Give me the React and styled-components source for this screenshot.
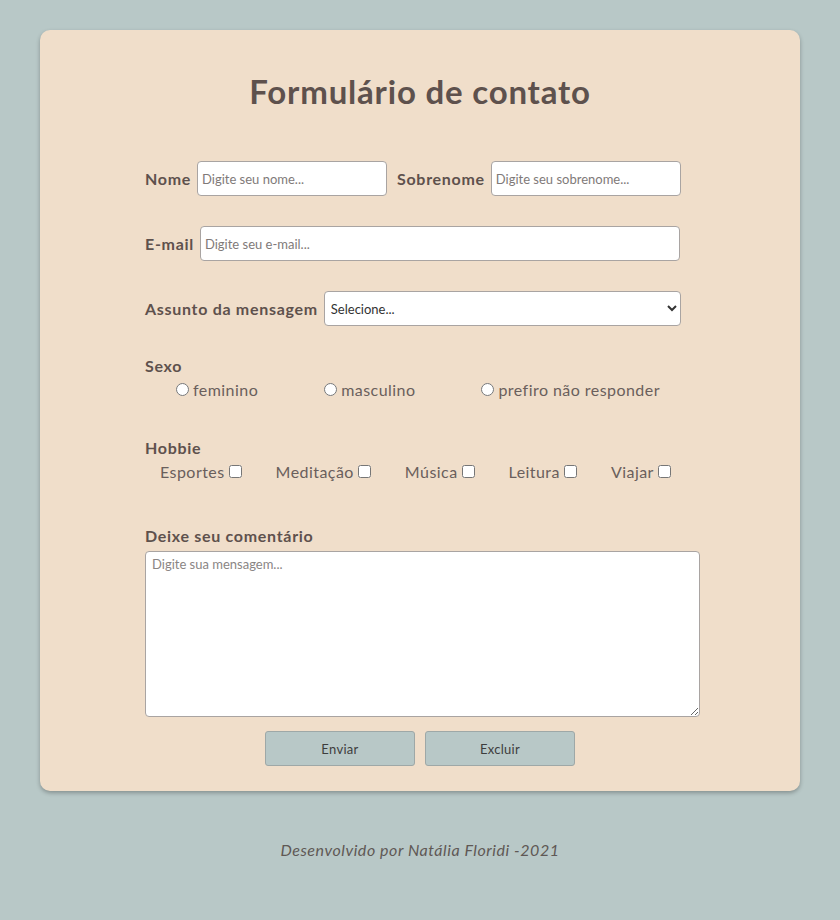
import styled, { createGlobalStyle } from "styled-components";

const GlobalStyle = createGlobalStyle`
  html, body {
    margin: 0;
    padding: 0;
    background: #b8c8c7;
  }
  body {
    font-family: Lato, "Open Sans", sans-serif;
    color: #5e514d;
  }
`;

const Page = styled.div`
  width: 840px;
  min-height: 920px;
  padding-top: 30px;
  box-sizing: border-box;
`;

const Card = styled.main`
  width: 760px;
  margin: 0 auto;
  background: #f0deca;
  border-radius: 10px;
  box-shadow: 0 2px 4px rgba(0, 0, 0, 0.28);
  padding: 40px 0 25px;
  box-sizing: border-box;
`;

const Title = styled.h1`
  margin: 0 0 49px;
  text-align: center;
  font-size: 33px;
  font-weight: 700;
  line-height: 42px;
  letter-spacing: 0.8px;
  color: #5e514d;
`;

const Form = styled.form`
  padding-left: 105px;
  width: 660px;
  box-sizing: border-box;
`;

const Row = styled.div`
  display: flex;
  align-items: center;
  height: 35px;
  margin-bottom: ${(p) => p.$gap || 30}px;
`;

const Label = styled.label`
  font-size: 16px;
  font-weight: 700;
  letter-spacing: 0.7px;
  margin-right: 6px;
  margin-left: ${(p) => p.$ml || 0}px;
  white-space: nowrap;
`;

const Input = styled.input`
  width: ${(p) => p.$w}px;
  height: 35px;
  box-sizing: border-box;
  border: 1px solid #a9a4a2;
  border-radius: 4px;
  background: #fff;
  padding: 0 4px;
  font-family: Lato, sans-serif;
  font-size: 13px;
  color: #555;
  outline: none;
  &::placeholder {
    color: #7f7a79;
  }
`;

const Select = styled.select`
  width: 357px;
  height: 35px;
  box-sizing: border-box;
  border: 1px solid #a9a4a2;
  border-radius: 4px;
  background: #fff;
  padding: 0 2px;
  font-family: Lato, sans-serif;
  font-size: 13px;
  color: #333;
`;

const GroupTitle = styled.div`
  font-size: 16px;
  font-weight: 700;
  letter-spacing: 0.7px;
  line-height: 20px;
`;

const Options = styled.div`
  display: flex;
  align-items: center;
  gap: ${(p) => p.$gap}px;
  padding-left: ${(p) => p.$pl}px;
  height: 26px;
  margin-bottom: ${(p) => p.$mb}px;
`;

const Option = styled.label`
  display: flex;
  align-items: center;
  font-size: 16px;
  letter-spacing: 0.45px;
  color: #6a5f5c;
  white-space: nowrap;
  & input {
    margin: 0 4px 0 0;
    width: 13px;
    height: 13px;
  }
  & input[type="checkbox"] {
    margin: 0 0 0 4px;
  }
`;

const TextArea = styled.textarea`
  display: block;
  width: 555px;
  height: 166px;
  box-sizing: border-box;
  margin-top: 5px;
  border: 1px solid #a9a4a2;
  border-radius: 4px;
  padding: 4px 6px;
  font-family: Lato, sans-serif;
  font-size: 13px;
  resize: both;
  outline: none;
  &::placeholder {
    color: #8a8584;
  }
`;

const Buttons = styled.div`
  display: flex;
  justify-content: center;
  gap: 10px;
  margin-top: 14px;
`;

const Button = styled.button`
  width: 150px;
  height: 35px;
  background: #b8c8c7;
  border: 1px solid #9ea8a7;
  border-radius: 3px;
  font-family: Lato, sans-serif;
  font-size: 13px;
  letter-spacing: 0.3px;
  color: #3d3d3d;
  cursor: pointer;
`;

const Footer = styled.footer`
  text-align: center;
  margin-top: 49px;
  font-size: 16px;
  font-style: italic;
  letter-spacing: 0.55px;
  color: #5f5855;
`;

const hobbies = ["Esportes", "Meditação", "Música", "Leitura", "Viajar"];

const App = () => {
  return (
    <Page>
      <GlobalStyle />
      <Card>
        <Title>Formulário de contato</Title>
        <Form onSubmit={(e) => e.preventDefault()}>
          <Row>
            <Label htmlFor="nome">Nome</Label>
            <Input id="nome" $w={190} placeholder="Digite seu nome..." />
            <Label htmlFor="sobrenome" $ml={10}>
              Sobrenome
            </Label>
            <Input id="sobrenome" $w={190} placeholder="Digite seu sobrenome..." />
          </Row>
          <Row>
            <Label htmlFor="email">E-mail</Label>
            <Input id="email" $w={480} placeholder="Digite seu e-mail..." />
          </Row>
          <Row $gap={30}>
            <Label htmlFor="assunto">Assunto da mensagem</Label>
            <Select id="assunto" defaultValue="">
              <option value="">Selecione...</option>
              <option>Dúvida</option>
              <option>Sugestão</option>
              <option>Reclamação</option>
            </Select>
          </Row>
          <GroupTitle>Sexo</GroupTitle>
          <Options $gap={66} $pl={31} $mb={36}>
            <Option>
              <input type="radio" name="sexo" />
              feminino
            </Option>
            <Option>
              <input type="radio" name="sexo" />
              masculino
            </Option>
            <Option>
              <input type="radio" name="sexo" />
              prefiro não responder
            </Option>
          </Options>
          <GroupTitle>Hobbie</GroupTitle>
          <Options $gap={34} $pl={15} $mb={42}>
            {hobbies.map((h) => (
              <Option key={h}>
                {h}
                <input type="checkbox" />
              </Option>
            ))}
          </Options>
          <GroupTitle>Deixe seu comentário</GroupTitle>
          <TextArea placeholder="Digite sua mensagem..." />
        </Form>
        <Buttons>
          <Button type="submit">Enviar</Button>
          <Button type="reset">Excluir</Button>
        </Buttons>
      </Card>
      <Footer>Desenvolvido por Natália Floridi -2021</Footer>
    </Page>
  );
};

export default App;
